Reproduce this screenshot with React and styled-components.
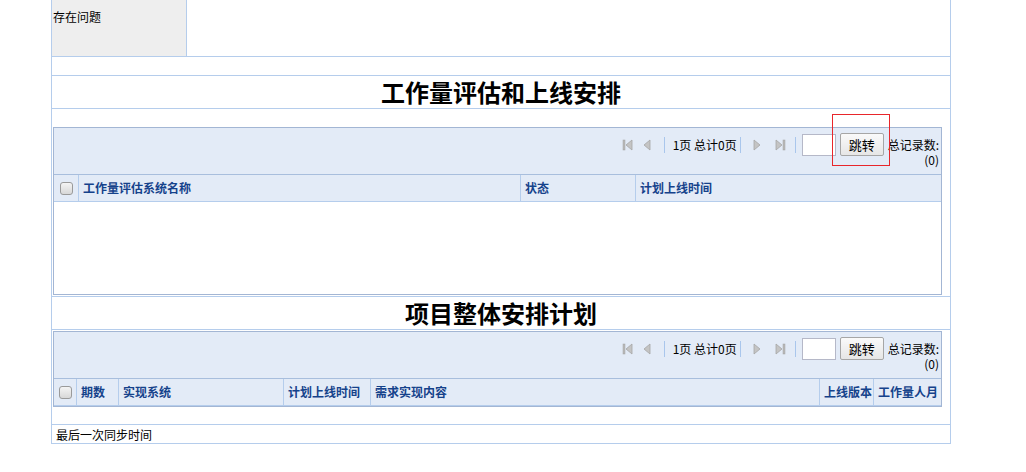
import React from "react";
import styled, { createGlobalStyle } from "styled-components";

const Global = createGlobalStyle`
  html, body { margin: 0; padding: 0; background: #fff; }
  body { font-family: "Noto Sans CJK SC", "Liberation Sans", sans-serif; font-size: 12px; color: #000; }
`;

const LINE = "#b5cdec";
const PANEL = "#a3b6d4";
const BG = "#e3ebf7";
const HEAD = "#15428b";

const Wrapper = styled.div`
  margin-left: 51px;
  width: 898px;
  border-left: 1px solid ${LINE};
  border-right: 1px solid ${LINE};
  border-bottom: 1px solid ${LINE};
`;

const Row = styled.div`
  display: flex;
  height: ${(p) => p.$h}px;
  border-bottom: 1px solid ${LINE};
  box-sizing: content-box;
`;

const LabelCell = styled.div`
  width: 133px;
  background: #eeeeee;
  border-right: 1px solid ${LINE};
  padding: 9px 0 0 1px;
  line-height: 16px;
`;

const ValueCell = styled.div`
  flex: 1;
`;

const TitleRow = styled.div`
  height: 32px;
  border-bottom: 1px solid ${LINE};
  display: flex;
  align-items: center;
  justify-content: center;
  font-size: 24px;
  font-weight: bold;
  line-height: 32px;
  box-sizing: content-box;
`;

const Section = styled.div`
  position: relative;
  padding: ${(p) => p.$pt}px 8px ${(p) => p.$pb}px 1px;
  border-bottom: 1px solid ${LINE};
`;

const Panel = styled.div`
  border: 1px solid ${PANEL};
  background: #fff;
`;

const Toolbar = styled.div`
  background: ${BG};
  height: 46px;
  box-sizing: border-box;
  padding: 5px 2px 0 0;
  display: flex;
  justify-content: flex-end;
  align-items: flex-start;
`;

const PagerIcon = styled.span`
  display: inline-flex;
  width: 12px;
  height: 23px;
  align-items: center;
  justify-content: center;
  margin-right: ${(p) => p.$mr}px;
`;

const Sep = styled.span`
  display: inline-block;
  width: 1px;
  height: 16px;
  background: #a9c6ec;
  margin: 4px ${(p) => p.$r}px 0 ${(p) => p.$l}px;
`;

const PageText = styled.span`
  line-height: 23px;
  white-space: nowrap;
`;

const JumpInput = styled.input`
  width: 34px;
  height: 22px;
  box-sizing: border-box;
  border: 1px solid #b5b8c8;
  background: #fff;
  margin: 1px 4px 0 0;
  padding: 0;
`;

const JumpButton = styled.button`
  width: 44px;
  height: 23px;
  box-sizing: border-box;
  border: 1px solid #a6a6a6;
  border-radius: 2px;
  background: linear-gradient(#fafafa, #e6e6e6);
  font-family: inherit;
  font-size: 13px;
  color: #000;
  padding: 0;
  margin-right: 4px;
  line-height: 20px;
`;

const Total = styled.span`
  display: flex;
  flex-direction: column;
  align-items: flex-end;
  line-height: 15px;
  padding-top: 4px;
  white-space: nowrap;
`;

const HeaderRow = styled.div`
  display: grid;
  grid-template-columns: ${(p) => p.$cols};
  background: ${BG};
  border-top: 1px solid #a8bedd;
  border-bottom: 1px solid ${LINE};
  height: 26px;
  box-sizing: content-box;
`;

const HeadCell = styled.div`
  border-right: 1px solid ${LINE};
  color: ${HEAD};
  font-weight: bold;
  font-size: 12px;
  line-height: 26px;
  padding-left: 4px;
  white-space: nowrap;
  overflow: hidden;
  &:last-child { border-right: none; }
`;

const CheckCell = styled.div`
  border-right: 1px solid ${LINE};
  display: flex;
  align-items: center;
  justify-content: center;
`;

const CheckBox = styled.span`
  display: inline-block;
  width: 11px;
  height: 11px;
  border: 1px solid #9a9a9a;
  border-radius: 3px;
  background: linear-gradient(#f4f4f4, #d8d8d8);
`;

const Body = styled.div`
  height: ${(p) => p.$h}px;
  background: #fff;
`;

const Highlight = styled.div`
  position: absolute;
  left: 780px;
  top: 5px;
  width: 56px;
  height: 50px;
  border: 1px solid #e8262b;
  pointer-events: none;
`;

const FootRow = styled.div`
  height: 18px;
  line-height: 20px;
  padding-left: 4px;
`;

const Tri = ({ dir, bar }) => {
  const left = dir === "left";
  return (
    <svg width="12" height="12" viewBox="0 0 12 12">
      {bar && (
        <rect x={left ? 1 : 9} y="1" width="2" height="10" fill="#b9b9b9" stroke="#a2a2a2" strokeWidth="0.5" />
      )}
      <polygon
        points={left ? (bar ? "10,1 4,6 10,11" : "9,1 3,6 9,11") : bar ? "2,1 8,6 2,11" : "3,1 9,6 3,11"}
        fill="#c4c4c4"
        stroke="#a6a6a6"
        strokeWidth="0.8"
      />
    </svg>
  );
};

const Pager = () => (
  <Toolbar>
    <PagerIcon $mr={7}><Tri dir="left" bar /></PagerIcon>
    <PagerIcon $mr={11}><Tri dir="left" /></PagerIcon>
    <Sep $l={0} $r={8} />
    <PageText>1页 总计0页</PageText>
    <Sep $l={3} $r={10} />
    <PagerIcon $mr={11}><Tri dir="right" /></PagerIcon>
    <PagerIcon $mr={9}><Tri dir="right" bar /></PagerIcon>
    <Sep $l={0} $r={6} />
    <JumpInput />
    <JumpButton>跳转</JumpButton>
    <Total>
      <span>总记录数:</span>
      <span>(0)</span>
    </Total>
  </Toolbar>
);

const Grid = ({ cols, heads, body }) => (
  <Panel>
    <Pager />
    <HeaderRow $cols={cols}>
      <CheckCell><CheckBox /></CheckCell>
      {heads.map((h) => (
        <HeadCell key={h}>{h}</HeadCell>
      ))}
    </HeaderRow>
    {body > 0 && <Body $h={body} />}
  </Panel>
);

export default function App() {
  return (
    <>
      <Global />
      <Wrapper>
        <Row $h={56}>
          <LabelCell>存在问题</LabelCell>
          <ValueCell />
        </Row>
        <Row $h={18} />
        <TitleRow>工作量评估和上线安排</TitleRow>
        <Section $pt={18} $pb={1}>
          <Grid
            cols="25px 442px 115px 1fr"
            heads={["工作量评估系统名称", "状态", "计划上线时间"]}
            body={92}
          />
          <Highlight />
        </Section>
        <TitleRow>项目整体安排计划</TitleRow>
        <Section $pt={1} $pb={17}>
          <Grid
            cols="23px 42px 165px 87px 449px 54px 1fr"
            heads={["期数", "实现系统", "计划上线时间", "需求实现内容", "上线版本", "工作量人月"]}
            body={0}
          />
        </Section>
        <FootRow>最后一次同步时间</FootRow>
      </Wrapper>
    </>
  );
}
